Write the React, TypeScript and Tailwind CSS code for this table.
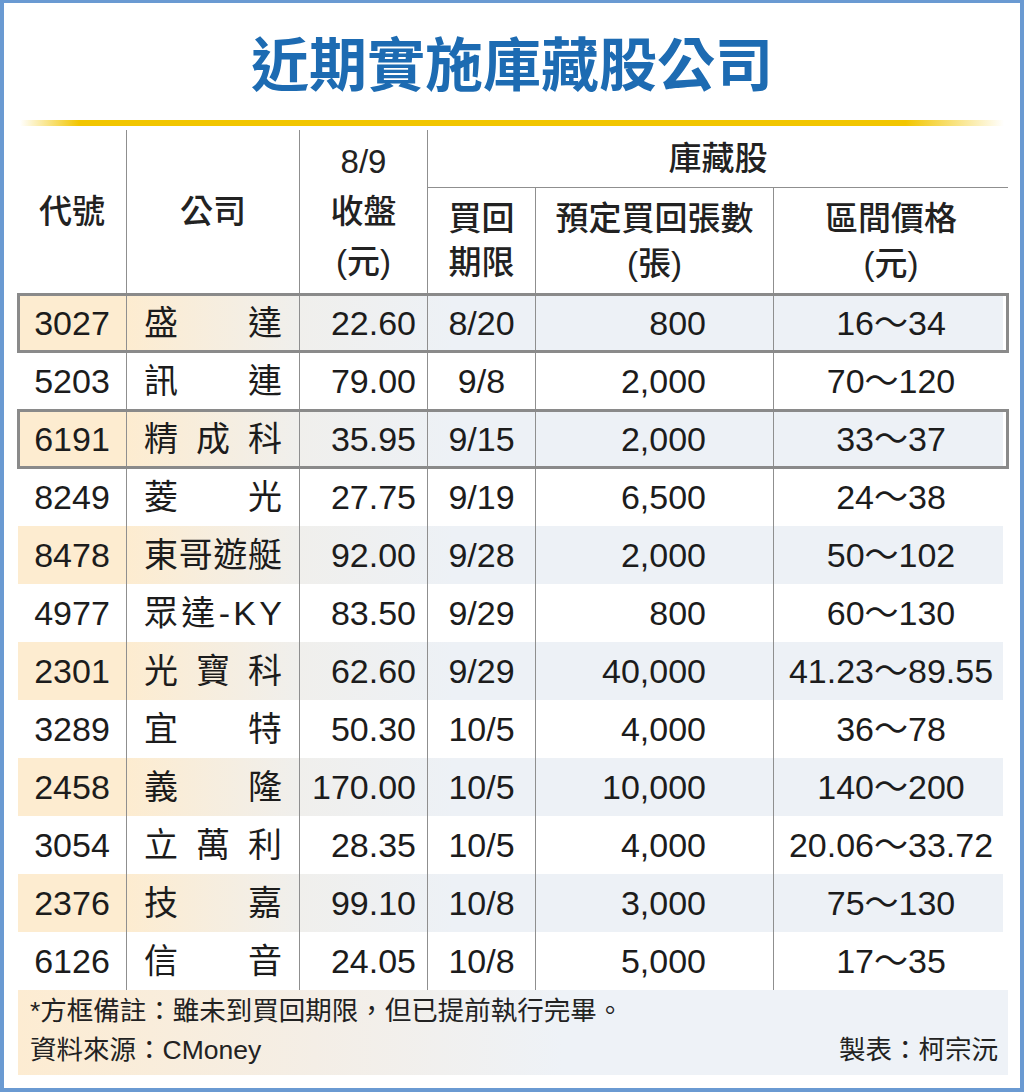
import React from "react";

interface Row {
  code: string;
  name: string[];
  close: string;
  due: string;
  qty: string;
  range: string;
  boxed?: boolean;
}

const rows: Row[] = [
  { code: "3027", name: ["盛", "達"], close: "22.60", due: "8/20", qty: "800", range: "16～34", boxed: true },
  { code: "5203", name: ["訊", "連"], close: "79.00", due: "9/8", qty: "2,000", range: "70～120" },
  { code: "6191", name: ["精", "成", "科"], close: "35.95", due: "9/15", qty: "2,000", range: "33～37", boxed: true },
  { code: "8249", name: ["菱", "光"], close: "27.75", due: "9/19", qty: "6,500", range: "24～38" },
  { code: "8478", name: ["東", "哥", "遊", "艇"], close: "92.00", due: "9/28", qty: "2,000", range: "50～102" },
  { code: "4977", name: ["眾", "達", "-", "K", "Y"], close: "83.50", due: "9/29", qty: "800", range: "60～130" },
  { code: "2301", name: ["光", "寶", "科"], close: "62.60", due: "9/29", qty: "40,000", range: "41.23～89.55" },
  { code: "3289", name: ["宜", "特"], close: "50.30", due: "10/5", qty: "4,000", range: "36～78" },
  { code: "2458", name: ["義", "隆"], close: "170.00", due: "10/5", qty: "10,000", range: "140～200" },
  { code: "3054", name: ["立", "萬", "利"], close: "28.35", due: "10/5", qty: "4,000", range: "20.06～33.72" },
  { code: "2376", name: ["技", "嘉"], close: "99.10", due: "10/8", qty: "3,000", range: "75～130" },
  { code: "6126", name: ["信", "音"], close: "24.05", due: "10/8", qty: "5,000", range: "17～35" },
];

const cols = "grid grid-cols-[108px_173px_128px_108px_238px_235px]";
const line = "border-l border-[#8f8f8f]";

function BodyRow({ row, shaded }: { row: Row; shaded: boolean }) {
  return (
    <div
      className={`${cols} h-[58px] text-[34px] leading-none text-[#1c1c1c] ${
        shaded
          ? "bg-[linear-gradient(90deg,#fdecd0_0%,#fdecd0_11%,#f0efec_28%,#edf1f6_44%,#edf1f6_99.5%,#ffffff_99.5%)]"
          : "bg-white"
      } ${row.boxed ? "outline-[3px] outline-solid outline-[#8a8a8a] outline-offset-[-2px]" : ""}`}
    >
      <div className="flex items-center justify-center">{row.code}</div>
      <div className={`${line} flex items-center justify-between px-[17px]`}>
        {row.name.map((c, i) => (
          <span key={i}>{c}</span>
        ))}
      </div>
      <div className={`${line} flex items-center justify-end pr-[11px]`}>{row.close}</div>
      <div className={`${line} flex items-center justify-center`}>{row.due}</div>
      <div className={`${line} flex items-center justify-end pr-[67px]`}>{row.qty}</div>
      <div className={`${line} flex items-center justify-center`}>{row.range}</div>
    </div>
  );
}

export default function App() {
  return (
    <div className="w-[1024px] h-[1092px] bg-white border-x-[4px] border-t-[3px] border-b-[4px] border-[#6a9ad2] font-['Liberation_Sans','Noto_Sans_CJK_TC',sans-serif]">
      <h1 className="pt-[29px] text-center text-[58px] leading-[58px] font-bold text-[#1d6bb2] font-['Noto_Sans_CJK_TC',sans-serif]">
        近期實施庫藏股公司
      </h1>

      <div className="mt-[30px] ml-[16px] w-[984px] h-[6px] bg-[linear-gradient(90deg,rgba(242,198,0,0)_0%,#f2c600_6%,#f2c600_90%,rgba(242,198,0,0)_100%)]" />

      <div className="ml-[14px] w-[990px] mt-[4px]">
        {/* header */}
        <div className={`${cols} grid-rows-[58px_106px] text-[33px] font-medium text-[#222]`}>
          <div className="row-span-2 flex items-center justify-center">代號</div>
          <div className={`${line} row-span-2 flex items-center justify-center`}>公司</div>
          <div className={`${line} row-span-2 flex flex-col items-center justify-center leading-[50px]`}>
            <span>8/9</span>
            <span>收盤</span>
            <span>(元)</span>
          </div>
          <div className={`${line} col-span-3 flex items-center justify-center border-b border-b-[#8f8f8f]`}>
            庫藏股
          </div>
          <div className={`${line} flex flex-col items-center justify-center leading-[44px]`}>
            <span>買回</span>
            <span>期限</span>
          </div>
          <div className={`${line} flex flex-col items-center justify-center leading-[45px]`}>
            <span>預定買回張數</span>
            <span>(張)</span>
          </div>
          <div className={`${line} flex flex-col items-center justify-center leading-[45px]`}>
            <span>區間價格</span>
            <span>(元)</span>
          </div>
        </div>

        {rows.map((r, i) => (
          <BodyRow key={r.code} row={r} shaded={i % 2 === 0} />
        ))}

        {/* footer */}
        <div className="h-[85px] pt-[2px] px-[12px] pr-[10px] text-[26.5px] leading-[39px] text-[#222] bg-[linear-gradient(90deg,#fdecd2_0%,#f4eee6_30%,#eef2f7_55%,#eef2f7_100%)]">
          <div>*方框備註：雖未到買回期限，但已提前執行完畢。</div>
          <div className="flex justify-between">
            <span>資料來源：CMoney</span>
            <span>製表：柯宗沅</span>
          </div>
        </div>
      </div>
    </div>
  );
}
